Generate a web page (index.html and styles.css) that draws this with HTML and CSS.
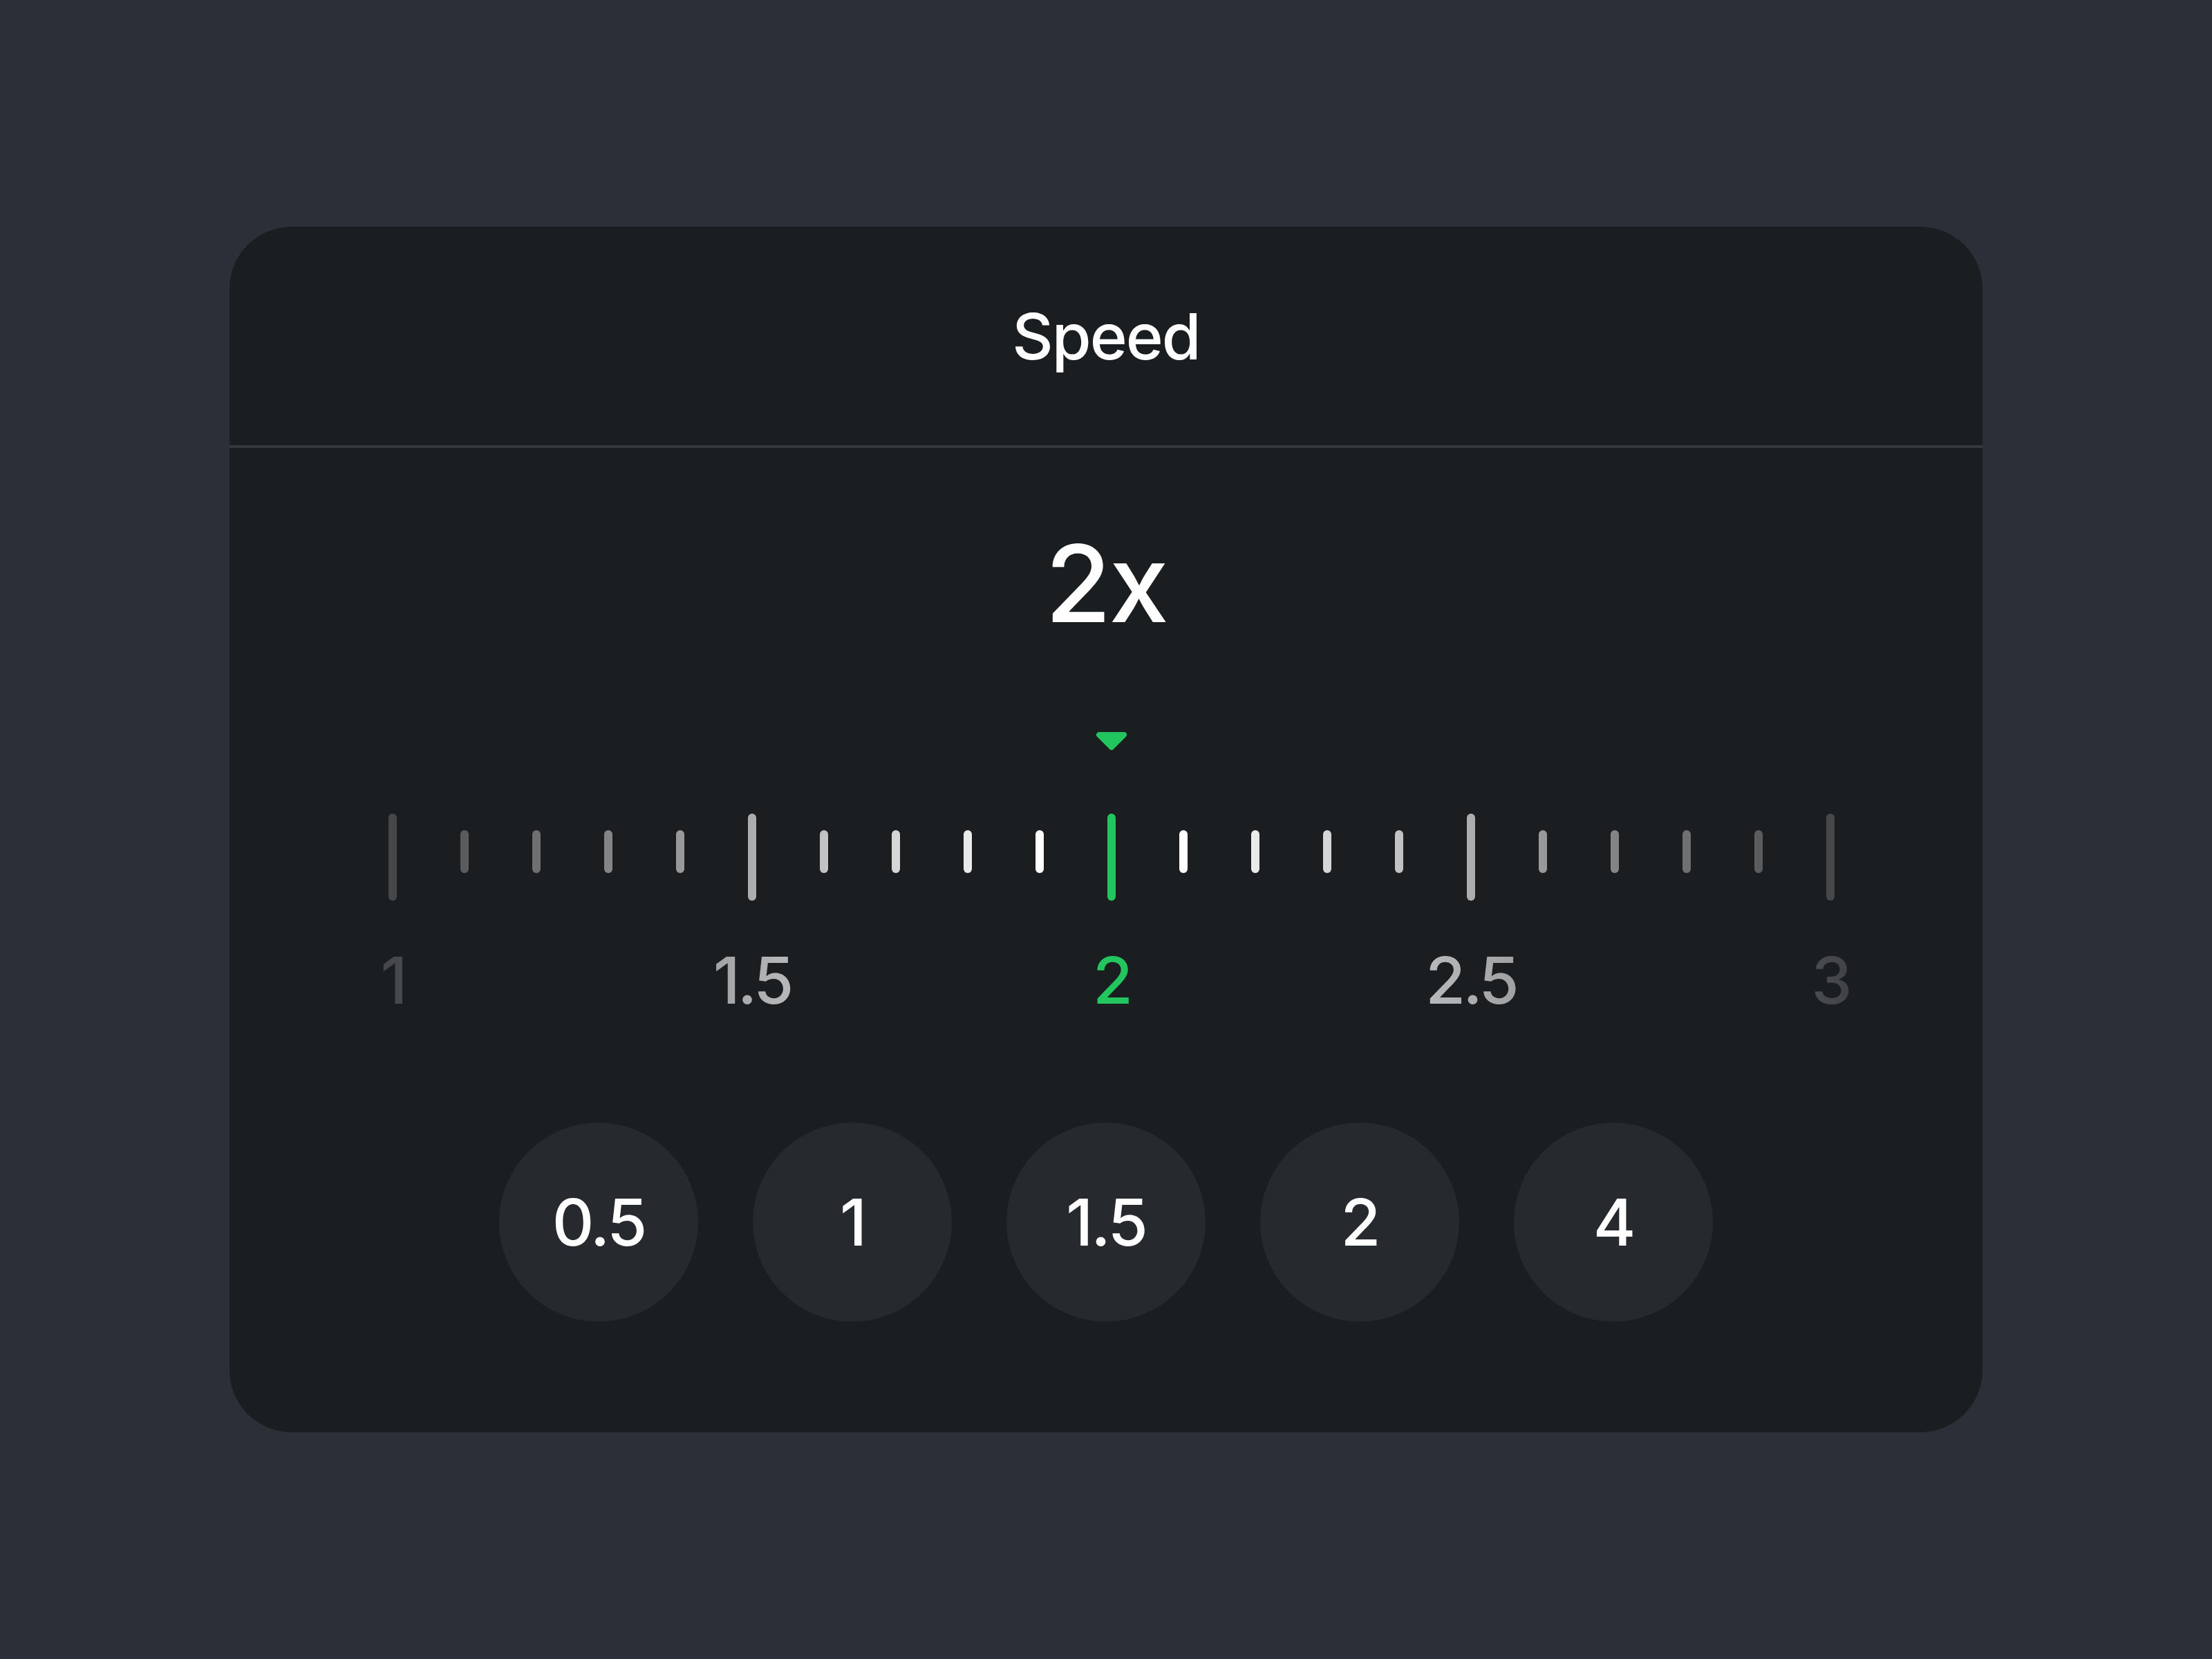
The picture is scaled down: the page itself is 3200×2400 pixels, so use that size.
FILE: index.html
```html
<!DOCTYPE html>
<html>
  <head>
    <meta charset="utf-8" />
    <title>Speed</title>
    <link rel="stylesheet" href="styles.css">
  </head>
  <body>
    <div class="speed-card">
      <div class="speed-header">Speed</div>
      <div class="speed-body">
        <div class="speed-value">2x</div>
        <svg class="pointer" width="46" height="26" viewBox="0 0 46 26">
          <polygon points="5,4 41,4 23,22" fill="#22c55e" stroke="#22c55e" stroke-width="8" stroke-linejoin="round" />
        </svg>
        <div class="ruler">
          <div class="ticks">
            <span class="tick major"></span>
            <span class="tick"></span>
            <span class="tick"></span>
            <span class="tick"></span>
            <span class="tick"></span>
            <span class="tick major"></span>
            <span class="tick"></span>
            <span class="tick"></span>
            <span class="tick"></span>
            <span class="tick"></span>
            <span class="tick major active"></span>
            <span class="tick"></span>
            <span class="tick"></span>
            <span class="tick"></span>
            <span class="tick"></span>
            <span class="tick major"></span>
            <span class="tick"></span>
            <span class="tick"></span>
            <span class="tick"></span>
            <span class="tick"></span>
            <span class="tick major"></span>
          </div>
          <div class="labels">
            <span class="label">1</span>
            <span class="label">1.5</span>
            <span class="label active">2</span>
            <span class="label">2.5</span>
            <span class="label">3</span>
          </div>
        </div>
        <div class="presets">
          <button class="preset">0.5</button>
          <button class="preset">1</button>
          <button class="preset">1.5</button>
          <button class="preset">2</button>
          <button class="preset">4</button>
        </div>
      </div>
    </div>
  </body>
</html>
```

FILE: styles.css
```css
body {
  margin: 0;
  min-height: 100vh;
  background: #2b2f37;
  display: flex;
  align-items: center;
  justify-content: center;
  font-family: Inter, "Noto Sans", sans-serif;
  color: #fff;
}
.speed-card {
  width: 2536px;
  background: #1b1e21;
  border-radius: 90px;
  overflow: hidden;
}
.speed-header {
  height: 316px;
  display: flex;
  align-items: center;
  justify-content: center;
  font-size: 92px;
  font-weight: 500;
  letter-spacing: -2px;
  border-bottom: 4px solid #35383d;
}
.speed-body {
  display: flex;
  flex-direction: column;
  align-items: center;
  padding: 118px 0 160px;
}
.speed-value {
  font-size: 155px;
  line-height: 155px;
  font-weight: 500;
  letter-spacing: -3px;
}
.pointer {
  display: block;
  margin-top: 138px;
  margin-left: 16px;
}
.ruler {
  width: 2184px;
  margin-left: 16px;
  margin-top: 92px;
  -webkit-mask-image: linear-gradient(to right, rgba(0, 0, 0, 0.14), #000 45.2%, #000 54.8%, rgba(0, 0, 0, 0.14));
  mask-image: linear-gradient(to right, rgba(0, 0, 0, 0.14), #000 45.2%, #000 54.8%, rgba(0, 0, 0, 0.14));
}
.ticks {
  display: grid;
  grid-template-columns: repeat(21, 104px);
  height: 126px;
  align-items: start;
  justify-items: center;
}
.tick {
  width: 12px;
  height: 62px;
  margin-top: 24px;
  border-radius: 6px;
  background: #fff;
}
.tick.major {
  height: 126px;
  margin-top: 0;
}
.tick.active {
  background: #22c55e;
}
.labels {
  display: flex;
  justify-content: space-between;
  margin-top: 68px;
}
.label {
  width: 104px;
  display: flex;
  justify-content: center;
  white-space: nowrap;
  font-size: 94px;
  line-height: 94px;
  font-weight: 500;
  letter-spacing: -4px;
}
.label.active {
  color: #22c55e;
}
.presets {
  display: flex;
  gap: 79px;
  margin-top: 159px;
}
.preset {
  width: 288px;
  height: 288px;
  border: 0;
  border-radius: 50%;
  background: #262a2e;
  color: #fff;
  font-family: inherit;
  font-size: 94px;
  font-weight: 500;
  letter-spacing: -3px;
  padding: 0;
}
```
